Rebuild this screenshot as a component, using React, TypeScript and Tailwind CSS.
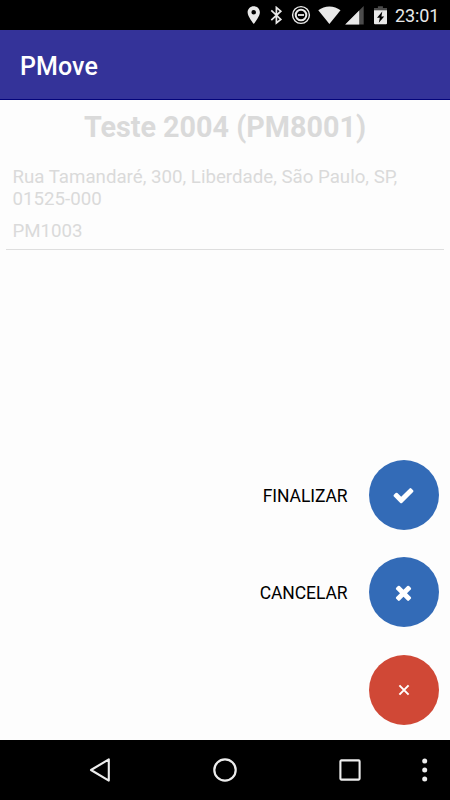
import React from "react";

const CHECK =
  "M1671 566q0 40-28 68l-724 724-136 136q-28 28-68 28t-68-28l-136-136-362-362q-28-28-28-68t28-68l136-136q28-28 68-28t68 28l294 295 656-657q28-28 68-28t68 28l136 136q28 28 28 68z";
const TIMES =
  "M1490 1322q0 40-28 68l-136 136q-28 28-68 28t-68-28l-294-294-294 294q-28 28-68 28t-68-28l-136-136q-28-28-28-68t28-68l294-294-294-294q-28-28-28-68t28-68l136-136q28-28 68-28t68 28l294 294 294-294q28-28 68-28t68 28l136 136q28 28 28 68t-28 68l-294 294 294 294q28 28 28 68z";

function StatusBar() {
  return (
    <div className="flex h-[30px] shrink-0 items-start bg-black pl-[247px] text-[#e9e9e9]">
      <svg className="mt-[6px] h-[19px] w-[13px] shrink-0" viewBox="0 0 13 19" fill="currentColor">
        <path
          fillRule="evenodd"
          d="M6.7 0.2C3.3.2.6 2.9.6 6.3c0 4.4 6.1 11.6 6.1 11.6s6.2-7.2 6.2-11.6c0-3.4-2.8-6.1-6.2-6.1Zm0 8.3a2.3 2.3 0 1 1 0-4.6 2.3 2.3 0 0 1 0 4.6Z"
        />
      </svg>
      <svg
        className="ml-[10px] mt-[6px] h-[19px] w-[13px] shrink-0"
        viewBox="0 0 13 19"
        fill="none"
        stroke="currentColor"
        strokeWidth="1.7"
      >
        <path d="M1.3 4.3 10.8 13.4 6.4 17V1.5l4.4 3.7L1.3 14.1" />
      </svg>
      <svg className="ml-[8px] mt-[5px] h-[20px] w-[20px] shrink-0" viewBox="0 0 20 20" fill="none" stroke="currentColor">
        <circle cx="10" cy="10" r="8.4" strokeWidth="1.4" />
        <circle cx="10" cy="10" r="5.3" strokeWidth="2" />
        <path d="M7 10h6" strokeWidth="1.8" />
      </svg>
      <svg className="ml-[7px] mt-[6px] h-[19px] w-[23px] shrink-0" viewBox="0 0 23 19" fill="currentColor">
        <path d="M.3 4.2C3.5 1.7 7.3.4 11.4.4s7.9 1.3 11.1 3.8L11.4 18Z" />
      </svg>
      <svg className="ml-[4px] mt-[6px] h-[19px] w-[19px] shrink-0" viewBox="0 0 19 19">
        <path d="M18.7 0v18.5H.2Z" fill="#4b4b4b" />
        <path d="M14.2 4.5v14H.2Z" fill="currentColor" />
      </svg>
      <svg className="ml-[10px] mt-[6px] h-[19px] w-[13px] shrink-0" viewBox="0 0 13 19">
        <path d="M0 2h3.9V.2h5V2H13v2.5H0Z" fill="#4b4b4b" />
        <path
          fillRule="evenodd"
          d="M0 4.2h13v13.1q0 1-1 1H1q-1 0-1-1ZM8.3 5.6 3 11.8h2.8l-1 5 5.4-6.3H7.4Z"
          fill="currentColor"
        />
      </svg>
      <span className="ml-[8px] mt-[6px] whitespace-nowrap text-[18px] leading-[20px] tracking-[-0.1px]">23:01</span>
    </div>
  );
}

interface ActionProps {
  label?: string;
  color: string;
  children: React.ReactNode;
}

function Action({ label, color, children }: ActionProps) {
  return (
    <div className="flex h-[70px] items-center justify-end">
      {label && <span className="mr-[21px] pt-[2px] text-[17.5px] leading-5 tracking-[-0.08px] text-black">{label}</span>}
      <button aria-label={label ?? "Fechar"} className={`flex h-[70px] w-[70px] items-center justify-center rounded-full text-white ${color}`}>
        {children}
      </button>
    </div>
  );
}

function NavigationBar() {
  return (
    <nav className="h-[60px] shrink-0 bg-black pl-[88px] text-[#ededed]">
      <div className="flex h-full items-center">
        <svg className="h-[26px] w-[24px]" viewBox="0 0 24 26" fill="none" stroke="currentColor" strokeWidth="2.1">
          <path d="M20.8 2.4v21.2L3 13Z" strokeLinejoin="round" />
        </svg>
        <svg className="ml-[100px] h-[26px] w-[26px]" viewBox="0 0 26 26" fill="none" stroke="currentColor" strokeWidth="2.2">
          <circle cx="13" cy="13" r="10.7" />
        </svg>
        <svg className="ml-[100px] h-[24px] w-[24px]" viewBox="0 0 24 24" fill="none" stroke="currentColor" strokeWidth="2.1">
          <rect x="2.4" y="2.4" width="19.2" height="19.2" rx="1" />
        </svg>
        <svg className="ml-[59px] h-[26px] w-[8px]" viewBox="0 0 8 26" fill="currentColor">
          <circle cx="3.7" cy="4" r="2.5" />
          <circle cx="3.7" cy="13" r="2.5" />
          <circle cx="3.7" cy="22" r="2.5" />
        </svg>
      </div>
    </nav>
  );
}

export default function App() {
  return (
    <div className="flex h-[800px] w-[450px] flex-col overflow-hidden bg-[#fdfdfd] font-[Roboto,sans-serif]">
      <StatusBar />
      <header className="flex h-[70px] shrink-0 items-center border-b border-[#04047a] bg-[#343399] pl-5 pt-[5px]">
        <h1 className="text-[25px] font-medium leading-[30px] tracking-[0.1px] text-white">PMove</h1>
      </header>
      <main className="flex flex-1 flex-col text-[#dadada]">
        <h2 className="mt-[9px] text-center text-[28.75px] font-bold leading-[36px]">Teste 2004 (PM8001)</h2>
        <div className="mx-[6px] mt-[21px] h-[84px] border-b border-[#dedede] pl-[6.5px] text-[18.7px] leading-[22px]">
          <p className="w-[400px]">Rua Tamandaré, 300, Liberdade, São Paulo, SP, 01525-000</p>
          <p className="mt-[10px]">PM1003</p>
        </div>
        <div className="mb-[15px] mr-[11.5px] mt-auto flex flex-col gap-[27.3px]">
          <Action label="FINALIZAR" color="bg-[#336bb7]">
            <svg className="h-[23px] w-[23px]" viewBox="0 20 1792 1792" fill="currentColor">
              <path d={CHECK} />
            </svg>
          </Action>
          <div className="mb-[0.4px]">
            <Action label="CANCELAR" color="bg-[#336bb7]">
              <svg className="h-[23px] w-[23px]" viewBox="0 0 1792 1792" fill="currentColor">
                <path d={TIMES} />
              </svg>
            </Action>
          </div>
          <Action color="bg-[#d04836]">
            <svg className="h-[12px] w-[12px]" viewBox="0 0 12 12" fill="none" stroke="currentColor" strokeWidth="2">
              <path d="m1.4 1.4 9.2 9.2m0-9.2-9.2 9.2" />
            </svg>
          </Action>
        </div>
      </main>
      <NavigationBar />
    </div>
  );
}
